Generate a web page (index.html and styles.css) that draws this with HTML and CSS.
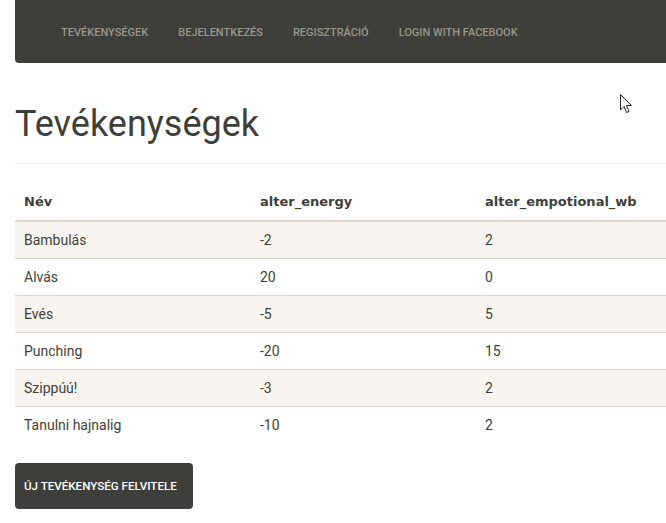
FILE: index.html
```html
<!DOCTYPE html>
<html lang="hu">
<head>
<meta charset="utf-8">
<title>Tevékenységek</title>
<link rel="stylesheet" href="styles.css">
</head>
<body>
<div class="page">
  <nav class="navbar">
    <ul class="nav">
      <li><a href="#">Tevékenységek</a></li>
      <li><a href="#">Bejelentkezés</a></li>
      <li><a href="#">Regisztráció</a></li>
      <li><a href="#">Login with Facebook</a></li>
    </ul>
  </nav>
  <h1 class="title">Tevékenységek</h1>
  <hr class="rule">
  <table class="table">
    <thead>
      <tr><th class="c1">Név</th><th class="c2">alter_energy</th><th>alter_empotional_wb</th></tr>
    </thead>
    <tbody>
      <tr><td>Bambulás</td><td>-2</td><td>2</td></tr>
      <tr><td>Alvás</td><td>20</td><td>0</td></tr>
      <tr><td>Evés</td><td>-5</td><td>5</td></tr>
      <tr><td>Punching</td><td>-20</td><td>15</td></tr>
      <tr><td>Szippúú!</td><td>-3</td><td>2</td></tr>
      <tr><td>Tanulni hajnalig</td><td>-10</td><td>2</td></tr>
    </tbody>
  </table>
  <a class="btn" href="#">Új tevékenység felvitele</a>
</div>
<svg class="cursor" width="13" height="20" viewBox="0 0 13 20"><path d="M0.5 0.5 L0.5 16 L4 12.5 L6.5 18.5 L9 17.5 L6.5 11.5 L11.5 11.5 Z" fill="#fff" stroke="#222" stroke-width="1"/></svg>
</body>
</html>
```

FILE: styles.css
```css
html { overflow: hidden; }
body {
  margin: 0;
  font-family: Roboto, "Noto Sans", sans-serif;
  color: #3e3f3a;
  background: #fff;
}
.page {
  width: 720px;
  padding-left: 15px;
}
.navbar {
  height: 63px;
  background: #3e3f3a;
  border-radius: 0 0 4px 4px;
  padding-left: 31px;
  display: flex;
  align-items: center;
}
.nav {
  list-style: none;
  margin: 0;
  padding: 0;
  display: flex;
}
.nav a {
  display: block;
  padding: 2px 15px 0;
  font-size: 11px;
  font-weight: 500;
  text-transform: uppercase;
  color: #98978b;
  text-decoration: none;
  line-height: 20px;
}
.title {
  margin: 40px 0 0;
  font-size: 36px;
  font-weight: 400;
  line-height: 42px;
  color: #3e3f3a;
}
.rule {
  margin: 18px 0 20px;
  border: 0;
  border-top: 1px solid #eeeeee;
}
.table {
  width: 100%;
  border-collapse: collapse;
  font-size: 14px;
  line-height: 20px;
}
.table th {
  text-align: left;
  font-family: "DejaVu Sans", Verdana, sans-serif;
  font-weight: bold;
  font-size: 13px;
  padding: 8px 9px;
  border-bottom: 2px solid #dfd7ca;
}
.table .c1 { width: 218px; }
.table .c2 { width: 207px; }
.table td {
  padding: 8px 9px;
  border-top: 1px solid #dfd7ca;
}
.table tbody tr:first-child td { border-top: 0; }
.table tbody tr:nth-child(odd) { background: #f8f5f0; }
.btn {
  display: inline-block;
  margin-top: 20px;
  height: 46px;
  line-height: 46px;
  padding: 0 16px 0 9px;
  background: #3e3f3a;
  color: #fff;
  border-radius: 4px;
  font-size: 11.6px;
  font-weight: 500;
  text-transform: uppercase;
  text-decoration: none;
}
.cursor {
  position: absolute;
  left: 620px;
  top: 94px;
}
```
